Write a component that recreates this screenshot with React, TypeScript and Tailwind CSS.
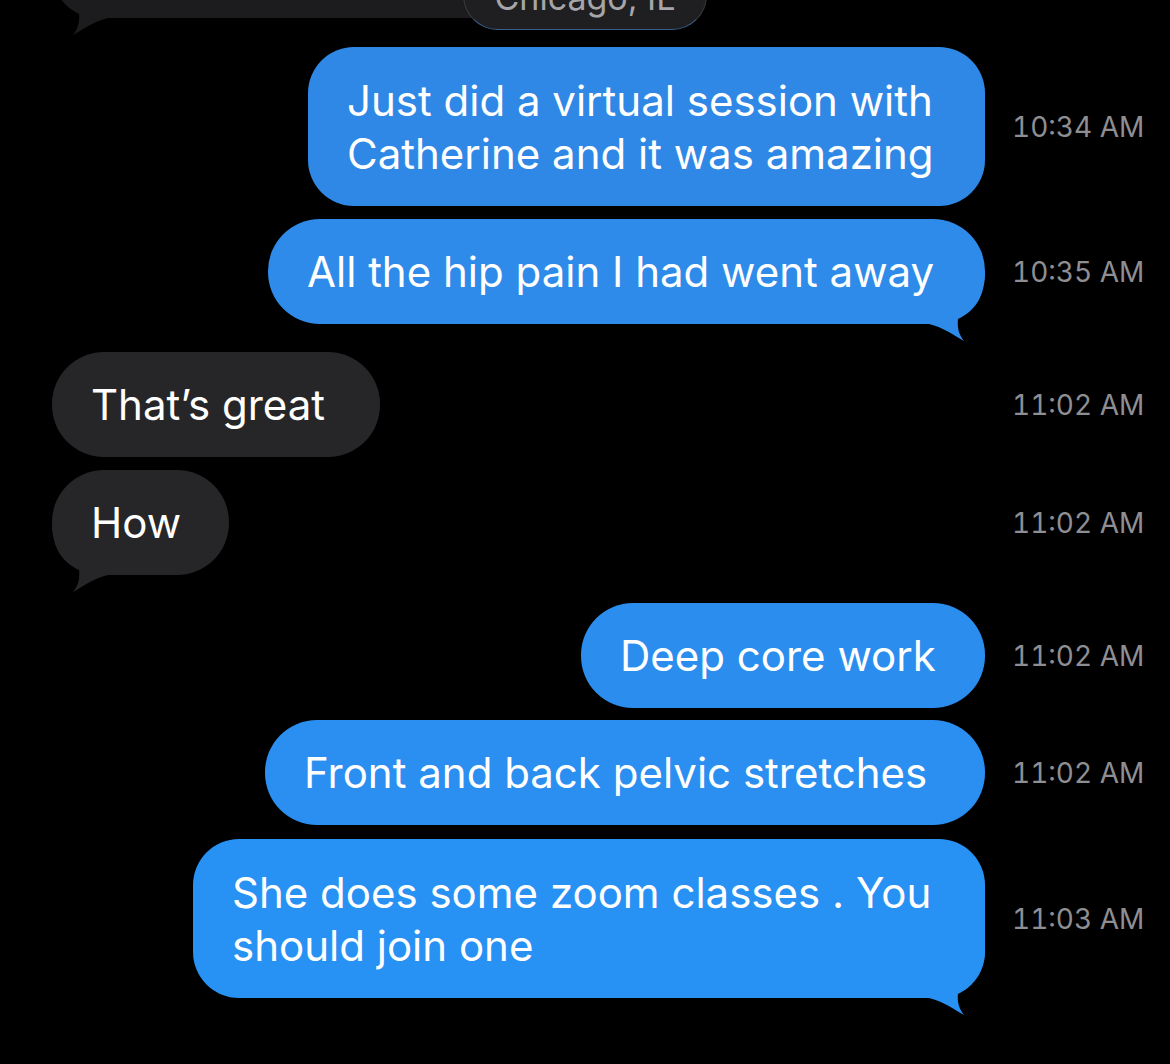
import React from "react";

const FONT = { fontFamily: "Inter, 'Noto Sans', 'Liberation Sans', sans-serif" };

function BlueTail({ color }: { color: string }) {
  return (
    <svg
      className="absolute right-0 bottom-[-18px] w-[60px] h-[70px]"
      viewBox="-60 -52 60 70"
      aria-hidden
    >
      <path
        d="M0,-52 C0,-30 -8,-14 -27,-5 C-28,4 -26,11 -21,17 C-30,12 -42,3 -56,0 L-60,0 L-60,-52 Z"
        fill={color}
      />
    </svg>
  );
}

function GrayTail({ color }: { color: string }) {
  return (
    <svg
      className="absolute left-0 bottom-[-18px] w-[60px] h-[70px]"
      viewBox="0 -52 60 70"
      aria-hidden
    >
      <path
        d="M0,-52 C0,-30 8,-14 27,-5 C28,4 26,11 21,17 C30,12 42,3 56,0 L60,0 L60,-52 Z"
        fill={color}
      />
    </svg>
  );
}

type Msg = {
  lines: string[];
  time: string;
  me: boolean;
  tail?: boolean;
  color: string;
  bubbleClass: string;
  rowClass: string;
};

const msgs: Msg[] = [
  {
    lines: ["Just did a virtual session with", "Catherine and it was amazing"],
    time: "10:34 AM",
    me: true,
    color: "#2f88e5",
    bubbleClass: "w-[677px] h-[159px] rounded-[46px] bg-[#2f88e5]",
    rowClass: "mt-[17px]",
  },
  {
    lines: ["All the hip pain I had went away"],
    time: "10:35 AM",
    me: true,
    tail: true,
    color: "#2e8be9",
    bubbleClass: "w-[717px] h-[105px] rounded-[52px] bg-[#2e8be9]",
    rowClass: "mt-[13px]",
  },
  {
    lines: ["That’s great"],
    time: "11:02 AM",
    me: false,
    color: "#262628",
    bubbleClass: "w-[328px] h-[105px] rounded-[52px] bg-[#262628]",
    rowClass: "mt-[28px]",
  },
  {
    lines: ["How"],
    time: "11:02 AM",
    me: false,
    tail: true,
    color: "#262628",
    bubbleClass: "w-[177px] h-[105px] rounded-[52px] bg-[#262628]",
    rowClass: "mt-[13px]",
  },
  {
    lines: ["Deep core work"],
    time: "11:02 AM",
    me: true,
    color: "#2b8eef",
    bubbleClass: "w-[404px] h-[105px] rounded-[52px] bg-[#2b8eef]",
    rowClass: "mt-[28px]",
  },
  {
    lines: ["Front and back pelvic stretches"],
    time: "11:02 AM",
    me: true,
    color: "#2a8ff1",
    bubbleClass: "w-[720px] h-[105px] rounded-[52px] bg-[#2a8ff1]",
    rowClass: "mt-[12px]",
  },
  {
    lines: ["She does some zoom classes . You", "should join one"],
    time: "11:03 AM",
    me: true,
    tail: true,
    color: "#2891f4",
    bubbleClass: "w-[792px] h-[159px] rounded-[46px] bg-[#2891f4]",
    rowClass: "mt-[14px]",
  },
];

export default function App() {
  return (
    <div className="w-full min-h-[1064px] bg-black overflow-hidden relative" style={FONT}>
      {/* cropped previous location card */}
      <div className="h-[30px] relative flex items-end">
        <div className="relative shrink-0 ml-[52px] mb-[12px] w-[560px] h-[100px] rounded-[46px] bg-[#1c1c1e]">
          <GrayTail color="#1c1c1e" />
        </div>
        <div className="absolute left-[463px] top-[-40px] w-[244px] h-[70px] rounded-[35px] bg-[#1f1f21] border border-[#3a3a3e] border-b-[#3d5f8f] flex items-end justify-center pb-[14px]">
          <span className="text-[34px] leading-none text-[#a5a5aa] whitespace-nowrap">Chicago, IL</span>
        </div>
      </div>

      {msgs.map((m, i) => (
        <div key={i} className={`flex items-center ${m.rowClass}`}>
          <div className={m.me ? "flex-1 flex justify-end" : "flex-1 flex justify-start pl-[52px]"}>
            <div className={`relative shrink-0 flex flex-col justify-center pl-[39px] ${m.bubbleClass}`}>
              {m.tail && (m.me ? <BlueTail color={m.color} /> : <GrayTail color={m.color} />)}
              {m.lines.map((l, j) => (
                <div key={j} className="relative text-[42px] leading-[53px] text-white whitespace-nowrap">
                  {l}
                </div>
              ))}
            </div>
          </div>
          <div className="w-[185px] shrink-0 pl-[27px] text-[28px] leading-none text-[#8e8e93] whitespace-nowrap tabular-nums">
            {m.time}
          </div>
        </div>
      ))}
    </div>
  );
}
